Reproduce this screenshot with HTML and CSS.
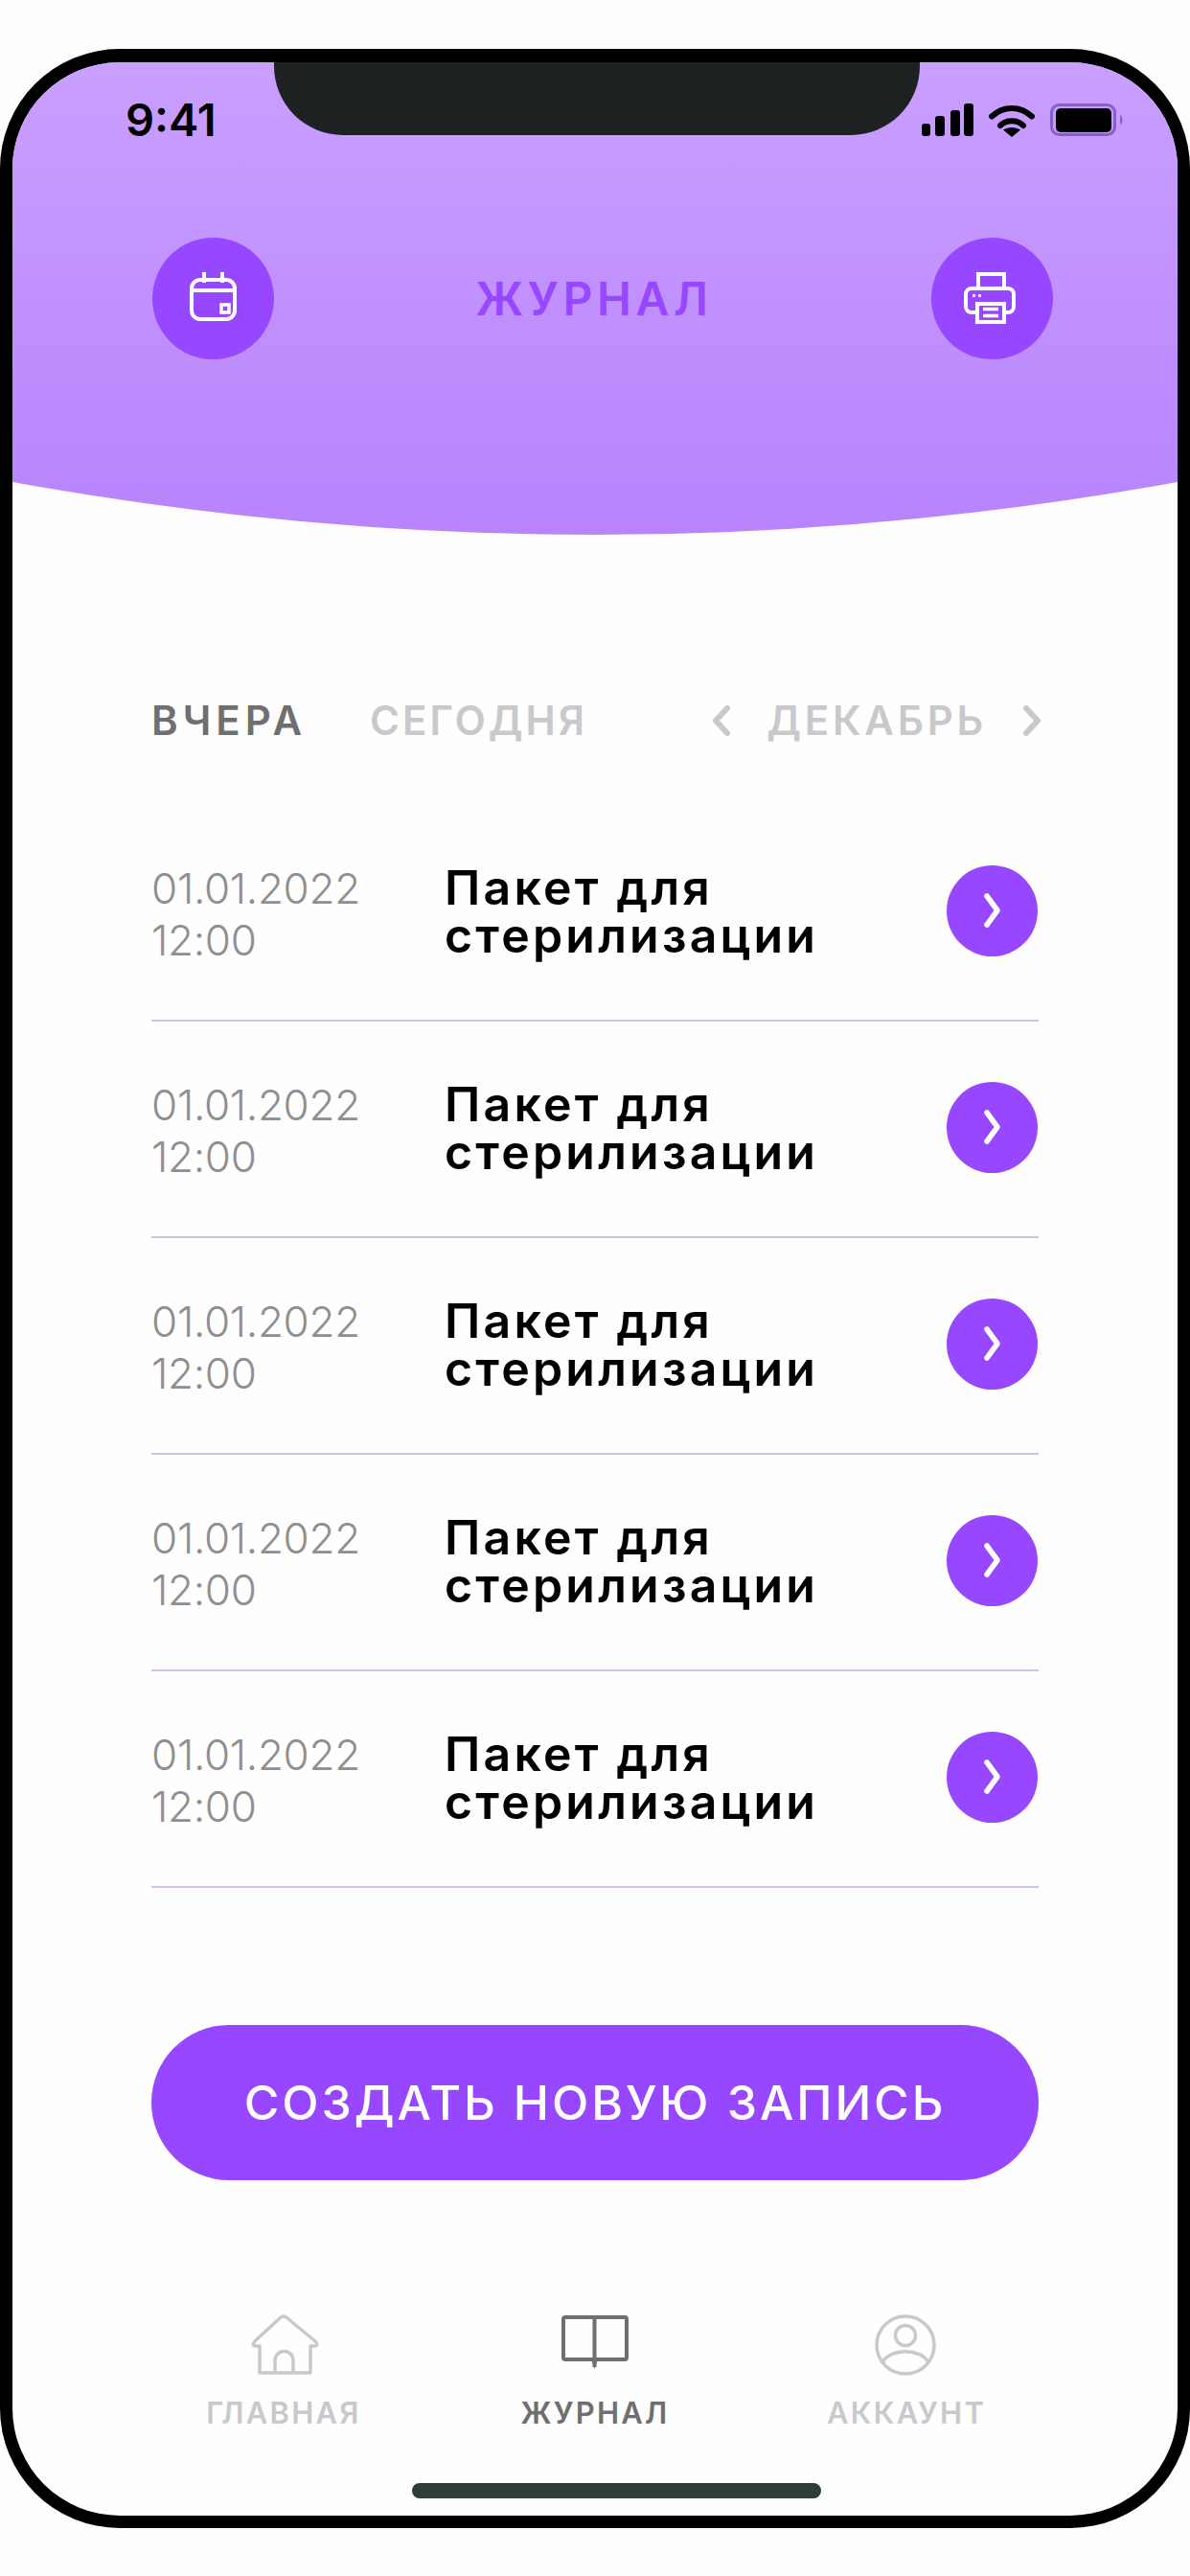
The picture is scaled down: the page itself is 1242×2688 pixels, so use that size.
FILE: index.html
```html
<!DOCTYPE html>
<html lang="ru">
<head>
<meta charset="utf-8">
<title>Журнал</title>
<link rel="stylesheet" href="styles.css">
</head>
<body>
<div class="device">
  <div class="notch"></div>
  <header class="header">
    <div class="status">
      <span class="time">9:41</span>
      <div class="status-icons">
        <svg class="ic-signal" width="54" height="34" viewBox="0 0 54 34"><rect x="0" y="21" width="9" height="13" rx="3"/><rect x="14" y="13" width="10" height="21" rx="3"/><rect x="30" y="7" width="10" height="27" rx="3"/><rect x="44" y="0" width="10" height="34" rx="3"/></svg>
        <svg class="ic-wifi" width="48" height="35" viewBox="0 0 48 35"><path d="M3 13.500C15 2 33 2 45 13.500M12 23C18 16.500 30 16.500 36 23" fill="none" stroke="#000" stroke-width="6" stroke-linecap="round"/><path d="M24 35L15 27.500C20 24 28 24 33 27.500Z"/></svg>
        <svg class="ic-battery" width="78" height="34" viewBox="0 0 78 34"><rect x="1.500" y="1.500" width="66" height="31" rx="8" fill="none" stroke="#8a5fc2" stroke-width="3"/><rect x="6" y="5" width="58" height="25" rx="5"/><path d="M73 12C76 13 76.500 21 73 22Z" fill="#8a5fc2"/></svg>
      </div>
    </div>
    <div class="actions">
      <button class="round-btn"><svg width="64" height="64" viewBox="0 0 64 64" fill="none" stroke="#fff" stroke-width="4"><rect x="9" y="12" width="45" height="41" rx="9"/><path d="M9 23H54M22 4V15M41 4V15"/><rect x="40" y="38" width="8" height="8" stroke-width="3.500"/></svg></button>
      <h1 class="title">ЖУРНАЛ</h1>
      <button class="round-btn"><svg width="64" height="64" viewBox="0 0 64 64" fill="none" stroke="#fff" stroke-width="4"><path d="M16 46H11A6 6 0 0 1 5 40V27A6 6 0 0 1 11 21H49A6 6 0 0 1 55 27V40A6 6 0 0 1 49 46H46"/><path d="M18 21V6H45V21"/><rect x="17" y="37" width="28" height="19"/><path d="M23 42.500H39M23 49.500H39" stroke-width="3.500"/><path d="M12 28.500H15M18 28.500H21" stroke-width="3"/></svg></button>
    </div>
  </header>

  <main class="content">
    <div class="tabs">
      <span class="tab tab-active">ВЧЕРА</span>
      <span class="tab tab-second">СЕГОДНЯ</span>
      <div class="month">
        <svg width="20" height="34" viewBox="0 0 20 34" fill="none" stroke="#c9c9cb" stroke-width="6" stroke-linecap="round" stroke-linejoin="round"><path d="M16 4L4 17L16 30"/></svg>
        <span class="tab month-name">ДЕКАБРЬ</span>
        <svg width="20" height="34" viewBox="0 0 20 34" fill="none" stroke="#c9c9cb" stroke-width="6" stroke-linecap="round" stroke-linejoin="round"><path d="M4 4L16 17L4 30"/></svg>
      </div>
    </div>

    <ul class="list">
      <li class="row">
        <div class="date">01.01.2022<br>12:00</div>
        <div class="name">Пакет для<br>стерилизации</div>
        <span class="go"><svg width="24" height="40" viewBox="0 0 24 40" fill="none" stroke="#fff" stroke-width="5.500" stroke-linecap="round" stroke-linejoin="round"><path d="M6 5L17 20L6 35"/></svg></span>
      </li>
      <li class="row">
        <div class="date">01.01.2022<br>12:00</div>
        <div class="name">Пакет для<br>стерилизации</div>
        <span class="go"><svg width="24" height="40" viewBox="0 0 24 40" fill="none" stroke="#fff" stroke-width="5.500" stroke-linecap="round" stroke-linejoin="round"><path d="M6 5L17 20L6 35"/></svg></span>
      </li>
      <li class="row">
        <div class="date">01.01.2022<br>12:00</div>
        <div class="name">Пакет для<br>стерилизации</div>
        <span class="go"><svg width="24" height="40" viewBox="0 0 24 40" fill="none" stroke="#fff" stroke-width="5.500" stroke-linecap="round" stroke-linejoin="round"><path d="M6 5L17 20L6 35"/></svg></span>
      </li>
      <li class="row">
        <div class="date">01.01.2022<br>12:00</div>
        <div class="name">Пакет для<br>стерилизации</div>
        <span class="go"><svg width="24" height="40" viewBox="0 0 24 40" fill="none" stroke="#fff" stroke-width="5.500" stroke-linecap="round" stroke-linejoin="round"><path d="M6 5L17 20L6 35"/></svg></span>
      </li>
      <li class="row">
        <div class="date">01.01.2022<br>12:00</div>
        <div class="name">Пакет для<br>стерилизации</div>
        <span class="go"><svg width="24" height="40" viewBox="0 0 24 40" fill="none" stroke="#fff" stroke-width="5.500" stroke-linecap="round" stroke-linejoin="round"><path d="M6 5L17 20L6 35"/></svg></span>
      </li>
    </ul>

    <button class="create">СОЗДАТЬ НОВУЮ ЗАПИСЬ</button>
  </main>

  <nav class="nav">
    <a class="nav-item">
      <svg width="90" height="90" viewBox="0 0 90 90" fill="none" stroke="#c9c9cb" stroke-width="3.500" stroke-linejoin="round"><path d="M20 46H16Q11 46 15 41L41 17Q45 13 49 17L78 41Q82 46 77 46H73V74H20Z"/><path d="M36 74V61A9.500 9.500 0 0 1 55 61V74"/></svg>
      <span class="nav-label">ГЛАВНАЯ</span>
    </a>
    <a class="nav-item nav-active">
      <svg width="90" height="90" viewBox="0 0 90 90" fill="none" stroke="#6f6f70" stroke-width="4" stroke-linejoin="round"><rect x="12" y="16" width="66" height="44" rx="2"/><path d="M44.500 16V68"/><path d="M41 60H48L44.500 70Z" fill="#6f6f70" stroke="none"/></svg>
      <span class="nav-label">ЖУРНАЛ</span>
    </a>
    <a class="nav-item">
      <svg width="90" height="90" viewBox="0 0 90 90" fill="none" stroke="#c9c9cb" stroke-width="3.500"><circle cx="44" cy="45" r="30"/><circle cx="44" cy="35" r="10.500"/><path d="M20 63C28 48 60 48 68 63"/></svg>
      <span class="nav-label">АККАУНТ</span>
    </a>
  </nav>
  <div class="home-bar"></div>
</div>
</body>
</html>
```

FILE: styles.css
```css
* { box-sizing: border-box; }
html, body { margin: 0; padding: 0; }
body {
  background: #fefefe;
  font-family: Inter, "Noto Sans", sans-serif;
  height: 2688px;
  overflow: hidden;
  padding-top: 51px;
}
.device {
  position: relative;
  width: 1242px;
  height: 2587px;
  background: #fefefe;
  border: solid #000;
  border-width: 14px 13px 13px 13px;
  border-radius: 125px;
  overflow: hidden;
}
.notch {
  position: absolute;
  z-index: 2;
  top: 0;
  left: 273px;
  width: 674px;
  height: 76px;
  background: #1e2122;
  border-radius: 0 0 72px 72px;
}
.header {
  height: 495px;
  background: linear-gradient(180deg, #c99fff 0%, #b883fd 100%);
  clip-path: path("M0 0H1216V438Q608 548 0 438Z");
  padding-top: 42px;
}
.status {
  display: flex;
  justify-content: space-between;
  align-items: center;
  height: 36px;
  padding: 0 59px 0 118px;
}
.time {
  font-size: 47px;
  line-height: 36px;
  font-weight: 600;
  color: #000;
}
.status-icons {
  display: flex;
  align-items: center;
  gap: 16px;
}
.ic-battery { margin-right: -4px; }
.actions {
  display: flex;
  justify-content: space-between;
  align-items: center;
  margin-top: 105px;
  padding: 0 130px 0 146px;
}
.round-btn {
  width: 127px;
  height: 127px;
  padding: 0;
  border: 0;
  border-radius: 50%;
  background: #9747ff;
  display: flex;
  align-items: center;
  justify-content: center;
}
.title {
  margin: 0 18px 0 0;
  font-size: 48px;
  line-height: 56px;
  font-weight: 600;
  letter-spacing: 4.600px;
  color: #9747ff;
}
.content {
  padding: 0 145px;
}
.tabs {
  display: flex;
  align-items: center;
  height: 40px;
  margin-top: 172px;
  color: #c9c9cb;
}
.tab {
  font-size: 42px;
  line-height: 40px;
  font-weight: 600;
}
.tab-active { color: #6f6f70; letter-spacing: 5px; }
.tab-second { margin-left: 66px; letter-spacing: 3px; }
.month-name { letter-spacing: 3.800px; }
.month {
  margin-left: auto;
  display: flex;
  align-items: center;
  gap: 37px;
  margin-right: -3px;
}
.list {
  list-style: none;
  margin: 68px 0 0;
  padding: 0;
}
.row {
  display: flex;
  align-items: center;
  height: 226px;
  border-bottom: 2px solid #d3c0e2;
}
.date {
  width: 306px;
  margin-top: 3px;
  font-size: 44px;
  line-height: 54px;
  font-weight: 300;
  letter-spacing: -0.300px;
  color: #8f8f92;
}
.name {
  flex: 1;
  font-size: 50px;
  line-height: 50px;
  font-weight: 600;
  letter-spacing: 3.200px;
  color: #000;
  margin-top: -2px;
}
.go {
  width: 95px;
  height: 95px;
  margin: -4px 1px 0 0;
  border-radius: 50%;
  background: #9747ff;
  display: flex;
  align-items: center;
  justify-content: center;
}
.create {
  display: block;
  width: 100%;
  height: 162px;
  margin-top: 143px;
  border: 0;
  border-radius: 81px;
  background: #9747ff;
  color: #fff;
  font-family: inherit;
  font-size: 50px;
  font-weight: 500;
  letter-spacing: 2.900px;
}
.nav {
  display: grid;
  grid-template-columns: repeat(3, 325px);
  justify-content: center;
  margin-top: 127px;
}
.nav-item {
  display: flex;
  flex-direction: column;
  align-items: center;
  color: #c9c9cb;
}
.nav-active { color: #6f6f70; }
.nav-label {
  margin-top: 8px;
  font-size: 31px;
  line-height: 36px;
  font-weight: 600;
  letter-spacing: 2.200px;
}
.home-bar {
  width: 427px;
  height: 16px;
  margin: 55px 0 0 417px;
  border-radius: 8px;
  background: #2f3d3a;
}
```
